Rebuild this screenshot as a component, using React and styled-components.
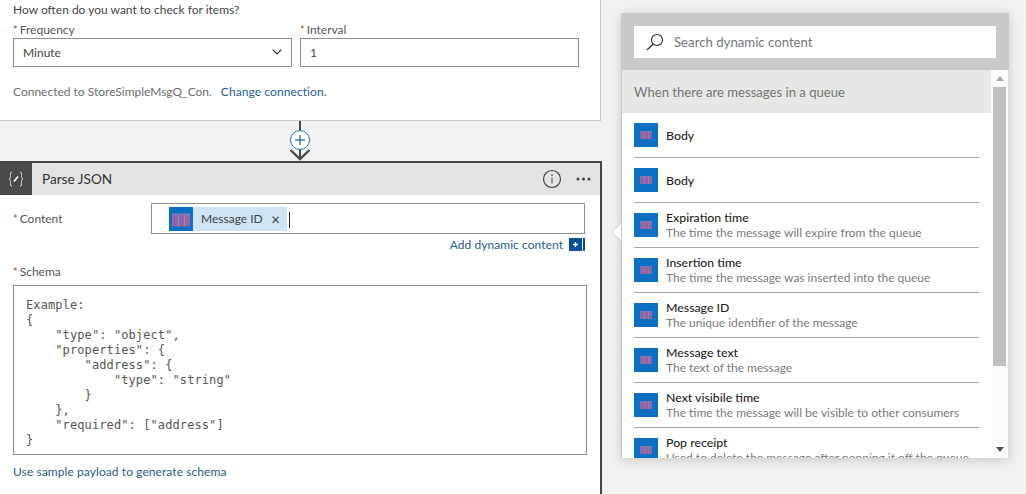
import React from "react";
import styled, { createGlobalStyle } from "styled-components";

const Global = createGlobalStyle`
  html, body { margin: 0; padding: 0; background: #f2f2f2; }
  * { box-sizing: border-box; }
`;

const Page = styled.div`
  width: 1026px; height: 494px; overflow: hidden; display: flex; background: #f2f2f2;
  font-family: "Lato", "Open Sans", sans-serif; font-size: 12px; color: #3a3a3a;
`;
const LeftColumn = styled.div`width: 602px; flex: none; display: flex; flex-direction: column;`;
const TriggerCard = styled.section`
  width: 601px; height: 121px; flex: none; background: #fff;
  border-right: 1px solid #c8c8c8; border-bottom: 1px solid #c8c8c8;
  padding: 1px 13px 0;
`;
const Question = styled.div`height: 21px; line-height: 18px; color: #444;`;
const FieldRow = styled.div`display: flex; gap: 8px;`;
const Field = styled.div`width: 279px;`;
const Label = styled.div`height: 16px; line-height: 16px; color: #555;`;
const Star = styled.span`color: #c4462a; margin-right: 2px; font-size: 11px;`;
const InputBox = styled.div`
  height: 29px; border: 1px solid #8f8f8f; display: flex; align-items: center; justify-content: space-between;
  padding: 0 9px 1px; color: #444; background: #fff;
`;
const ConnectedRow = styled.div`margin-top: 16px; line-height: 18px; color: #6d6d6d; display: flex; gap: 9px;`;
const Link = styled.span`color: #2a5a8c; letter-spacing: .08px;`;
const Connector = styled.div`height: 40px; flex: none; position: relative;`;
const ConnectorIcon = styled.svg`position: absolute; left: 288px; top: 0;`;
const ActionCard = styled.section`
  flex: 1; border: 2px solid #444; border-left: none; border-bottom: none; background: #fff;
  display: flex; flex-direction: column;
`;
const ActionHeader = styled.header`
  height: 32px; flex: none; background: #e3e3e3; display: flex; align-items: center;
`;
const ActionBadge = styled.div`
  width: 32px; height: 32px; background: #4a4a4a; color: #e8e8e8; display: flex; align-items: center; justify-content: center;
`;
const ActionTitle = styled.div`margin-left: 10px; font-size: 13.6px; color: #333; flex: 1;`;
const HeaderIcons = styled.div`display: flex; align-items: center; gap: 14px; padding-right: 9px;`;
const ActionBody = styled.div`padding: 8px 14px 0 13px;`;
const ContentRow = styled.div`display: flex; align-items: center;`;
const ContentLabel = styled(Label)`width: 138px; flex: none;`;
const TokenInput = styled.div`
  width: 434px; height: 31px; border: 1px solid #8f8f8f; padding: 1px 17px; display: flex; align-items: center;
`;
const Chip = styled.div`
  height: 24px; width: 118px; background: #cfe3f3; display: flex; align-items: center; color: #444; flex: none;
`;
const ChipText = styled.span`margin-left: 8px; flex: 1;`;
const ChipClose = styled.span`margin-right: 7px; color: #444; font-size: 15px;`;
const Caret = styled.span`width: 1px; height: 16px; background: #222; margin: 2px 0 0 2px;`;
const AddRow = styled.div`
  height: 22px; padding-bottom: 2px; display: flex; align-items: center; justify-content: flex-end; gap: 6px; color: #2a5a8c; width: 572px;
  letter-spacing: .06px;
`;
const AddPlus = styled.svg`flex: none;`;
const SchemaLabel = styled(Label)`margin-top: 8px;`;
const SchemaBox = styled.pre`
  margin: 5px 0 0; width: 574px; height: 170px; border: 1px solid #8f8f8f; padding: 12px 12px;
  font-family: "DejaVu Sans Mono", monospace; font-size: 12px; letter-spacing: .1px; line-height: 15px; color: #555;
`;
const SampleLink = styled(Link)`display: block; margin-top: 8px; line-height: 18px;`;

const RightColumn = styled.div`flex: 1; padding: 13px 0 0 19px;`;
const Panel = styled.aside`
  width: 388px; height: 445px; position: relative; display: flex; flex-direction: column; background: #fff;
  box-shadow: 0 2px 10px rgba(0,0,0,.18);
`;
const Pointer = styled.div`
  position: absolute; left: -6px; top: 213px; width: 12px; height: 12px; background: #fff; transform: rotate(45deg);
  box-shadow: -1px 1px 1px rgba(0,0,0,.08);
`;
const SearchHeader = styled.div`height: 57px; flex: none; background: #c8c9c8; padding: 13px 13px 12px;`;
const SearchBox = styled.div`
  height: 32px; background: #fff; display: flex; align-items: center; padding-left: 12px; color: #777; gap: 10px; font-size: 13.2px;
`;
const PanelBody = styled.div`
  flex: 1; min-height: 0; display: flex; border-left: 1px solid #c8c8c8; border-right: 1px solid #ddd; position: relative; background: #fff;
`;
const ListArea = styled.div`width: 369px; flex: none; overflow: hidden;`;
const GroupTitle = styled.div`
  height: 43px; background: #e7e8e6; display: flex; align-items: center; padding-left: 12px; color: #747474; font-size: 13.100px;
`;
const ItemRow = styled.div`height: 45px; padding: 0 12px;`;
const ItemInner = styled.div`
  height: 45px; display: flex; align-items: center; gap: 8px; border-bottom: 1px solid #a8a8a8; width: 345px;
`;
const ItemText = styled.div`min-width: 0; white-space: nowrap; padding-top: ${p => p.$two ? 1 : 0}px;`;
const ItemName = styled.div`color: #1f1f1f; line-height: 15px; font-weight: 500; font-size: 12.3px;`;
const ItemDesc = styled.div`color: #7a7a7a; line-height: 16px;`;
const Scrollbar = styled.div`flex: 1; display: flex; flex-direction: column; align-items: center; background: #fbfbfb;`;
const ScrollArrow = styled.svg`flex: none; margin: 6px 0 6px;`;
const ScrollThumb = styled.div`width: 13px; height: 279px; background: #c0c0c0;`;
const ScrollSpace = styled.div`flex: 1;`;

const TokenIcon = ({ big }) => {
  const w = big ? 18 : 12, h = big ? 13 : 8;
  const x = (24 - w) / 2, y = (24 - h) / 2 + (big ? 1 : 0);
  const top = big ? 2 : 1;
  const line = big ? "#a880bc" : "#9a78b4";
  return (
    <svg width="24" height="24" viewBox="0 0 24 24" style={{ flex: "none", display: "block" }}>
      <rect width="24" height="24" fill="#0b6fc2" />
      <g style={{ filter: "blur(.6px)" }}>
        <rect x={x} y={y} width={w} height={h} fill="#8e66a8" />
        <rect x={x} y={y} width={w} height={top} fill="#7c78bc" />
        <rect x={x + w / 3} y={y + top} width="1" height={h - top} fill={line} />
        <rect x={x + (2 * w) / 3} y={y + top} width="1" height={h - top} fill={line} />
      </g>
    </svg>
  );
};

const items = [
  ["Body"], ["Body"],
  ["Expiration time", "The time the message will expire from the queue"],
  ["Insertion time", "The time the message was inserted into the queue"],
  ["Message ID", "The unique identifier of the message"],
  ["Message text", "The text of the message"],
  ["Next visibile time", "The time the message will be visible to other consumers"],
  ["Pop receipt", "Used to delete the message after popping it off the queue"],
];

const schema = `Example:
{
    "type": "object",
    "properties": {
        "address": {
            "type": "string"
        }
    },
    "required": ["address"]
}`;

export default function App() {
  return (
    <Page>
      <Global />
      <LeftColumn>
        <TriggerCard>
          <Question>How often do you want to check for items?</Question>
          <FieldRow>
            <Field>
              <Label><Star>*</Star>Frequency</Label>
              <InputBox>
                Minute
                <svg width="10" height="6" viewBox="0 0 10 6"><path d="M.7.7L5 5l4.300-4.300" fill="none" stroke="#333" strokeWidth="1.200" /></svg>
              </InputBox>
            </Field>
            <Field>
              <Label><Star>*</Star>Interval</Label>
              <InputBox>1</InputBox>
            </Field>
          </FieldRow>
          <ConnectedRow>
            <span>Connected to StoreSimpleMsgQ_Con.</span>
            <Link>Change connection.</Link>
          </ConnectedRow>
        </TriggerCard>
        <Connector>
          <ConnectorIcon width="24" height="40" viewBox="0 0 24 40">
            <path d="M12 0v39" stroke="#4a4a4a" strokeWidth="2" fill="none" />
            <path d="M2.500 29L12 38l9.500-9" stroke="#4a4a4a" strokeWidth="2.400" fill="none" />
            <circle cx="12" cy="19" r="9.500" fill="#fff" stroke="#2f6ea5" strokeWidth="1" />
            <path d="M7 19h10M12 14v10" stroke="#3f7cb3" strokeWidth="1.500" fill="none" />
          </ConnectorIcon>
        </Connector>
        <ActionCard>
          <ActionHeader>
            <ActionBadge>
              <svg width="18" height="18" viewBox="0 0 18 18" fill="none" stroke="#d8d8d8" strokeWidth="1">
                <path d="M5 2C3 2 3.500 3.500 3.500 5.500S3.500 8.500 2 9c1.500.5 1.500 1.500 1.500 3.500S3 16 5 16" />
                <path d="M13 2c2 0 1.500 1.500 1.500 3.500s0 3 1.500 3.500c-1.500.5-1.500 1.500-1.500 3.500S15 16 13 16" />
                <path d="M7 11.500l4-5" stroke="#f2f2f2" strokeWidth="2" />
              </svg>
            </ActionBadge>
            <ActionTitle>Parse JSON</ActionTitle>
            <HeaderIcons>
              <svg width="20" height="20" viewBox="0 0 20 20" fill="none">
                <circle cx="10" cy="10" r="8.500" stroke="#444" strokeWidth="1.200" />
                <path d="M10 8.500v6" stroke="#666" strokeWidth="1.200" />
                <circle cx="10" cy="6" r=".9" fill="#666" />
              </svg>
              <svg width="15" height="4" viewBox="0 0 15 4">
                <circle cx="2" cy="2" r="1.500" fill="#444" />
                <circle cx="7.500" cy="2" r="1.500" fill="#444" />
                <circle cx="13" cy="2" r="1.500" fill="#444" />
              </svg>
            </HeaderIcons>
          </ActionHeader>
          <ActionBody>
            <ContentRow>
              <ContentLabel><Star>*</Star>Content</ContentLabel>
              <TokenInput>
                <Chip>
                  <TokenIcon big />
                  <ChipText>Message ID</ChipText>
                  <ChipClose>×</ChipClose>
                </Chip>
                <Caret />
              </TokenInput>
            </ContentRow>
            <AddRow>
              Add dynamic content
              <AddPlus width="16" height="13" viewBox="0 0 16 13">
                <rect width="16" height="13" fill="#0a4f9e" />
                <rect x="13" width="1" height="13" fill="#fff" />
                <path d="M4 6.500h5M6.500 4v5" stroke="#fff" strokeWidth="1.300" />
              </AddPlus>
            </AddRow>
            <SchemaLabel><Star>*</Star>Schema</SchemaLabel>
            <SchemaBox>{schema}</SchemaBox>
            <SampleLink>Use sample payload to generate schema</SampleLink>
          </ActionBody>
        </ActionCard>
      </LeftColumn>
      <RightColumn>
        <Panel>
          <Pointer />
          <SearchHeader>
            <SearchBox>
              <svg width="18" height="18" viewBox="0 0 18 18" fill="none" stroke="#222" strokeWidth="1.100">
                <circle cx="11" cy="7" r="5.500" />
                <path d="M7 11l-6 6" />
              </svg>
              Search dynamic content
            </SearchBox>
          </SearchHeader>
          <PanelBody>
            <ListArea>
              <GroupTitle>When there are messages in a queue</GroupTitle>
              {items.map(([name, desc], i) => (
                <ItemRow key={i}>
                  <ItemInner>
                    <TokenIcon />
                    <ItemText $two={!!desc}>
                      <ItemName>{name}</ItemName>
                      {desc && <ItemDesc>{desc}</ItemDesc>}
                    </ItemText>
                  </ItemInner>
                </ItemRow>
              ))}
            </ListArea>
            <Scrollbar>
              <ScrollArrow width="8" height="5" viewBox="0 0 8 5"><path d="M0 5l4-5 4 5z" fill="#aaa" /></ScrollArrow>
              <ScrollThumb />
              <ScrollSpace />
              <ScrollArrow width="8" height="5" viewBox="0 0 8 5"><path d="M0 0l4 5 4-5z" fill="#555" /></ScrollArrow>
            </Scrollbar>
          </PanelBody>
        </Panel>
      </RightColumn>
    </Page>
  );
}
